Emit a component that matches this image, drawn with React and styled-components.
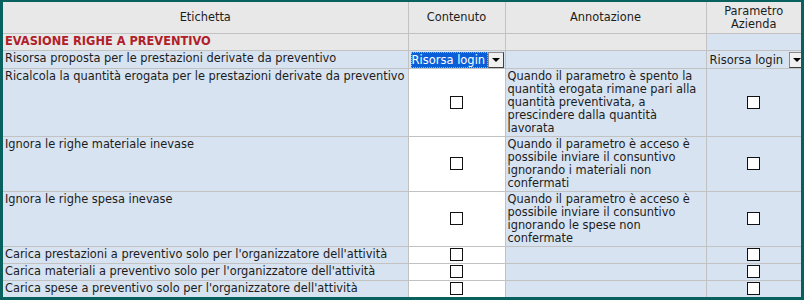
import React from 'react'
import styled, {createGlobalStyle} from 'styled-components'

const GlobalStyle = createGlobalStyle`
  html, body {
    margin: 0;
    padding: 0;
    background: #ffffff;
  }
`

const Frame = styled.div`
  width: 804px;
  height: 300px;
  box-sizing: border-box;
  border: 3px solid #08615f;
  border-top-width: 2px;
  background: #d7e3f1;
  overflow: hidden;
  font-family: 'DejaVu Sans', Tahoma, sans-serif;
  font-size: 11.4px;
  line-height: 13px;
  color: #1c1c1c;
`

const Table = styled.table`
  width: 798px;
  border-collapse: collapse;
  table-layout: fixed;
`

const HeadCell = styled.th`
  background: #e8e8e8;
  font-weight: normal;
  text-align: center;
  vertical-align: middle;
  height: 31px;
  padding: 0 2px;
  border-right: 1px solid #c2c2c2;
  border-bottom: 1px solid #c2c2c2;
  &:last-child {
    border-right: none;
  }
`

const Cell = styled.td`
  background: ${({white, gray}) => (white ? '#ffffff' : gray ? '#e8e8e8' : '#d7e3f1')};
  text-align: ${({center}) => (center ? 'center' : 'left')};
  vertical-align: ${({middle}) => (middle ? 'middle' : 'top')};
  padding: ${({tight, wrap}) =>
    tight ? '1px 2px 0 2px' : wrap ? '1px 2px 1px 2px' : '1px 2px 2px 2px'};
  border-right: 1px solid #c2c2c2;
  border-bottom: 1px solid #c2c2c2;
  white-space: ${({wrap}) => (wrap ? 'normal' : 'nowrap')};
  overflow: hidden;
  &:last-child {
    border-right: none;
  }
`

const Section = styled.span`
  color: #b0202a;
  font-weight: bold;
`

const Check = styled.span`
  display: inline-block;
  width: 11px;
  height: 11px;
  border: 1px solid #111;
  background: #fff;
  vertical-align: middle;
`

const Select = styled.div`
  display: flex;
  align-items: stretch;
  height: 16px;
  width: ${({width}) => width}px;
  box-sizing: border-box;
`

const SelectValue = styled.div`
  flex: 1;
  padding: 0 1px;
  line-height: 16px;
  font-size: 11.5px;
  white-space: nowrap;
  overflow: hidden;
  ${({focused}) =>
    focused
      ? `
    background: #0a5fd8;
    color: #fff;
    outline: 1px dotted #e6b800;
    outline-offset: -1px;
  `
      : ''}
`

const Arrow = styled.div`
  width: 16px;
  flex-shrink: 0;
  box-sizing: border-box;
  border: 1px solid #8a8a8a;
  border-right-color: #404040;
  border-bottom-color: #404040;
  background: #f0f0f0;
  display: flex;
  align-items: center;
  justify-content: center;
  &::after {
    content: '';
    border-left: 4px solid transparent;
    border-right: 4px solid transparent;
    border-top: 4px solid #000;
  }
`

const rows = [
  {
    label: 'Ricalcola la quantità erogata per le prestazioni derivate da preventivo',
    note: 'Quando il parametro è spento la quantità erogata rimane pari alla quantità preventivata, a prescindere dalla quantità lavorata',
  },
  {
    label: 'Ignora le righe materiale inevase',
    note: 'Quando il parametro è acceso è possibile inviare il consuntivo ignorando i materiali non confermati',
  },
  {
    label: 'Ignora le righe spesa inevase',
    note: 'Quando il parametro è acceso è possibile inviare il consuntivo ignorando le spese non confermate',
  },
  {label: "Carica prestazioni a preventivo solo per l'organizzatore dell'attività", note: ''},
  {label: "Carica materiali a preventivo solo per l'organizzatore dell'attività", note: ''},
  {label: "Carica spese a preventivo solo per l'organizzatore dell'attività", note: ''},
]

export default function App() {
  return (
    <>
      <GlobalStyle />
      <Frame>
        <Table>
          <colgroup>
            <col style={{width: 405}} />
            <col style={{width: 97}} />
            <col style={{width: 201}} />
            <col style={{width: 95}} />
          </colgroup>
          <thead>
            <tr>
              <HeadCell>Etichetta</HeadCell>
              <HeadCell>Contenuto</HeadCell>
              <HeadCell>Annotazione</HeadCell>
              <HeadCell>
                Parametro
                <br />
                Azienda
              </HeadCell>
            </tr>
          </thead>
          <tbody>
            <tr>
              <Cell gray>
                <Section>EVASIONE RIGHE A PREVENTIVO</Section>
              </Cell>
              <Cell gray />
              <Cell gray />
              <Cell />
            </tr>
            <tr>
              <Cell>Risorsa proposta per le prestazioni derivate da preventivo</Cell>
              <Cell tight>
                <Select width={93}>
                  <SelectValue focused>Risorsa login</SelectValue>
                  <Arrow />
                </Select>
              </Cell>
              <Cell />
              <Cell tight>
                <Select width={96}>
                  <SelectValue>Risorsa login</SelectValue>
                  <Arrow />
                </Select>
              </Cell>
            </tr>
            {rows.map((r) => (
              <tr key={r.label}>
                <Cell>{r.label}</Cell>
                <Cell white center middle>
                  <Check />
                </Cell>
                <Cell wrap>{r.note}</Cell>
                <Cell center middle>
                  <Check />
                </Cell>
              </tr>
            ))}
          </tbody>
        </Table>
      </Frame>
    </>
  )
}
